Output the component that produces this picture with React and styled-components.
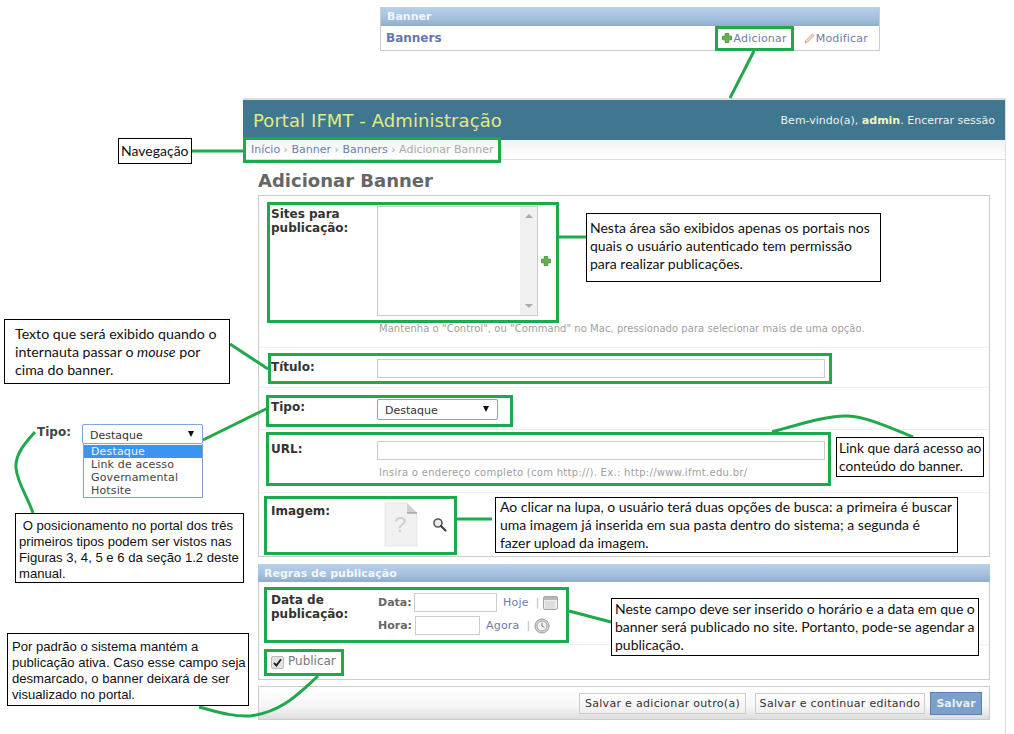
import React from "react";
import styled, { createGlobalStyle, css } from "styled-components";

const GlobalStyle = createGlobalStyle`
  html, body { margin: 0; padding: 0; background: #fff; }
  body { font-family: "DejaVu Sans", Verdana, sans-serif; color: #333; }
`;

const GREEN = "#22a84c";

const Canvas = styled.div`
  position: relative;
  width: 1014px;
  height: 734px;
  padding-top: 7px;
  box-sizing: border-box;
  overflow: hidden;
  background: #fff;
`;

/* ---------- top module ---------- */
const Module = styled.section`
  width: 500px;
  margin-left: 380px;
  box-sizing: border-box;
  border: 1px solid #ccc;
  border-top: 0;
`;
const CaptionBar = styled.div`
  height: ${(p) => p.$h}px;
  display: flex;
  align-items: center;
  padding-left: 6px;
  background: linear-gradient(#b9d0e9, #a4c0de 60%, #8fadcc);
  color: #f2f6fb;
  font-size: 11px;
  font-weight: 700;
`;
const ModuleRow = styled.div`
  height: 24px;
  display: flex;
  align-items: center;
  padding-left: 5px;
  background: #fff;
`;
const ModuleTitle = styled.span`
  flex: 1;
  font-size: 12px;
  font-weight: 700;
  color: #5f7aa8;
`;
const ModuleLink = styled.span`
  display: flex;
  align-items: center;
  gap: 1px;
  font-size: 11px;
  letter-spacing: 0.2px;
  color: #6d7ea6;
  margin-right: ${(p) => p.$mr}px;
`;

/* ---------- admin page ---------- */
const AdminPage = styled.main`
  width: 763px;
  height: 636px;
  margin: 47px 0 0 243px;
  box-sizing: border-box;
  border-top: 2px solid #ddd;
  border-right: 1px solid #ddd;
`;
const Header = styled.header`
  height: 40px;
  display: flex;
  align-items: center;
  justify-content: space-between;
  padding: 0 10px;
  background: #417690;
`;
const Brand = styled.h1`
  margin: 0;
  font-size: 18px;
  font-weight: 400;
  letter-spacing: 0.08px;
  color: #e3ea83;
`;
const Welcome = styled.div`
  font-size: 11px;
  color: #edf3e6;
  b { color: #f4f6b8; }
`;
const Breadcrumb = styled.nav`
  height: 20px;
  display: flex;
  align-items: center;
  box-sizing: border-box;
  padding-left: 8px;
  border-bottom: 1px solid #ddd;
  background: linear-gradient(#f3f3f3, #fff);
  font-size: 11px;
  color: #aaa;
  a { color: #6a82b0; }
`;
const Content = styled.div`
  padding: 0 15px;
`;
const PageTitle = styled.h2`
  height: 35px;
  margin: 0;
  padding-top: 6px;
  box-sizing: border-box;
  display: flex;
  align-items: center;
  font-size: 18px;
  font-weight: 700;
  color: #666;
`;
const Fieldset = styled.div`
  border: 1px solid #ccc;
  ${(p) => p.$noTop && css`border-top: 0;`}
`;
const FormRow = styled.div`
  height: ${(p) => p.$h}px;
  box-sizing: border-box;
  display: flex;
  padding: ${(p) => p.$pt}px 0 0 12px;
  border-bottom: 1px solid #eee;
  &:last-child { border-bottom: 0; }
`;
const Label = styled.label`
  width: 106px;
  flex: none;
  font-size: 12px;
  font-weight: 700;
  line-height: 14px;
  color: #333;
  margin-top: ${(p) => p.$mt || 0}px;
`;
const Field = styled.div`
  display: flex;
  flex-direction: column;
`;
const Help = styled.div`
  margin: 7px 0 0 2px;
  font-size: 10px;
  line-height: 12px;
  letter-spacing: ${(p) => p.$ls || 0}px;
  color: #a0a0a0;
  white-space: nowrap;
`;
const ListRow = styled.div`
  display: flex;
  align-items: center;
  gap: 3px;
`;
const ListBox = styled.div`
  width: 161px;
  height: 110px;
  box-sizing: border-box;
  border: 1px solid #ccc;
  display: flex;
  justify-content: flex-end;
`;
const Scrollbar = styled.div`
  width: 17px;
  background: #f0f0f0;
  display: flex;
  flex-direction: column;
  justify-content: space-between;
  align-items: center;
  padding: 7px 0;
`;
const ScrollArrow = styled.i`
  width: 0;
  height: 0;
  border-left: 4px solid transparent;
  border-right: 4px solid transparent;
  ${(p) => p.$up ? css`border-bottom: 4px solid #aaa;` : css`border-top: 4px solid #aaa;`}
`;
const TextInput = styled.input`
  display: block;
  width: ${(p) => p.$w}px;
  height: 19px;
  box-sizing: border-box;
  padding: 0;
  margin: 0;
  border: 1px solid #ccc;
  background: #fff;
`;
const SelectBox = styled.div`
  width: 121px;
  height: ${(p) => p.$h || 21}px;
  box-sizing: border-box;
  display: flex;
  align-items: center;
  justify-content: space-between;
  padding: 2px 8px 0 7px;
  border: 1px solid #7fa6de;
  border-radius: 2px;
  background: #fff;
  box-shadow: 0 0 1px #b7cdea;
  font-size: 11px;
  color: #333;
`;
const Caret = styled.i`
  width: 0;
  height: 0;
  margin-top: -3px;
  border-left: 3.5px solid transparent;
  border-right: 3.5px solid transparent;
  border-top: 6px solid #111;
`;
const ImageField = styled.div`
  display: flex;
  align-self: flex-start;
  align-items: center;
  gap: 14px;
  margin-left: 7px;
`;
const RegrasBar = styled(CaptionBar)`
  margin-top: 7px;
`;
const DateLines = styled.div`
  display: flex;
  flex-direction: column;
  gap: 4px;
  margin-left: 1px;
`;
const DateLine = styled.div`
  display: flex;
  align-items: center;
  font-size: 11px;
  color: #667;
`;
const DateCaption = styled.span`
  width: ${(p) => p.$w}px;
  font-weight: 700;
  color: #666;
`;
const DateLink = styled.span`
  margin-left: 6px;
  letter-spacing: 0.2px;
  color: #6d7ea6;
`;
const Pipe = styled.span`
  margin: 0 4px 0 7px;
  color: #bbb;
`;
const CheckRow = styled.div`
  height: 34px;
  box-sizing: border-box;
  display: flex;
  align-items: flex-start;
  gap: 4px;
  padding: 9px 0 0 12px;
  font-size: 12px;
  line-height: 14px;
  color: #777;
`;
const CheckBox = styled.span`
  width: 11px;
  height: 11px;
  margin-top: 2px;
  display: flex;
  align-items: center;
  justify-content: center;
  border: 1px solid #bbb;
  border-radius: 2px;
  background: #e4e4e4;
`;
const SubmitRow = styled.div`
  height: 34px;
  margin-top: 6px;
  box-sizing: border-box;
  display: flex;
  align-items: center;
  justify-content: flex-end;
  gap: 5px;
  padding-right: 7px;
  border: 1px solid #ccc;
  background: linear-gradient(#fff, #f6f6f6 60%, #ddd);
`;
const Button = styled.button`
  height: 21px;
  width: ${(p) => p.$w}px;
  margin: 0 ${(p) => p.$mr || 0}px 0 0;
  padding: 0;
  border: 1px solid #ccc;
  background: linear-gradient(#fff, #eee);
  font: 400 11px "DejaVu Sans", Verdana, sans-serif;
  letter-spacing: 0.3px;
  color: #333;
`;
const PrimaryButton = styled(Button)`
  height: 23px;
  border: 1px solid #5b80b2;
  background: #7ca0c7;
  color: #e8f0f8;
  font-weight: 700;
  letter-spacing: 0;
`;

/* ---------- annotations, lying over the page ---------- */
const Overlay = styled.svg`
  position: absolute;
  inset: 0;
  pointer-events: none;
`;
const Highlight = styled.div`
  position: absolute;
  left: ${(p) => p.$x}px;
  top: ${(p) => p.$y}px;
  width: ${(p) => p.$w}px;
  height: ${(p) => p.$h}px;
  box-sizing: border-box;
  border: 3px solid ${GREEN};
  pointer-events: none;
`;
const Callout = styled.div`
  position: absolute;
  left: ${(p) => p.$x}px;
  top: ${(p) => p.$y}px;
  width: ${(p) => p.$w}px;
  height: ${(p) => p.$h}px;
  box-sizing: border-box;
  padding: ${(p) => p.$pad || "5px 3px"};
  border: 1px solid #000;
  background: #fff;
  color: #111;
  font-family: ${(p) => (p.$arial ? '"Liberation Sans", Arial, sans-serif' : 'Lato, "Open Sans", sans-serif')};
  font-size: ${(p) => p.$size || 14}px;
  line-height: ${(p) => p.$lh || 18}px;
  white-space: pre;
`;
const TipoDemo = styled.div`
  position: absolute;
  left: 37px;
  top: 424px;
  display: flex;
  background: #fff;
`;
const TipoLabel = styled.span`
  width: 45px;
  padding-top: 1px;
  font-size: 12px;
  font-weight: 700;
  line-height: 14px;
  color: #444;
`;
const DropList = styled.ul`
  width: 120px;
  margin: 0 0 0 1px;
  padding: 1px 0 0;
  box-sizing: border-box;
  height: 54px;
  list-style: none;
  border: 1px solid #85a0c4;
  border-top: 0;
  font-size: 11px;
  letter-spacing: 0.15px;
  color: #444;
`;
const DropItem = styled.li`
  height: 13px;
  line-height: 14px;
  padding-left: 7px;
  background: ${(p) => (p.$on ? "#3b94f0" : "transparent")};
  color: ${(p) => (p.$on ? "#eef6ff" : "inherit")};
`;

/* ---------- icons ---------- */
const PlusIcon = () => (
  <svg width="10" height="10" viewBox="0 0 10 10">
    <path d="M3.2 .5h3.6v2.7h2.7v3.6H6.8v2.7H3.2V6.8H.5V3.2h2.7z" fill="#6aaf50" stroke="#3f8a3a" strokeWidth=".8" />
  </svg>
);
const PencilIcon = () => (
  <svg width="11" height="11" viewBox="0 0 11 11">
    <path d="M8.4 1 10 2.6 3.6 9 1 10l1-2.6z" fill="#f6e3b8" stroke="#c9938a" strokeWidth=".9" />
  </svg>
);
const DocIcon = () => (
  <svg width="34" height="45" viewBox="0 0 34 45">
    <path d="M1 1h22l10 10v33H1z" fill="#f1f1f1" stroke="#e6e6e6" />
    <path d="M23 1v10h10z" fill="#cfcfcf" />
    <path d="M23 11h10" stroke="#999" strokeWidth="1.2" />
    <text x="10" y="30" fontFamily="'Liberation Sans', sans-serif" fontSize="22" fill="#cfcfcf">?</text>
  </svg>
);
const LensIcon = () => (
  <svg width="15" height="15" viewBox="0 0 15 15">
    <circle cx="6" cy="6" r="4" fill="#e8eef0" stroke="#555" strokeWidth="1.6" />
    <path d="M9 9l4.5 4.5" stroke="#444" strokeWidth="2.2" strokeLinecap="round" />
  </svg>
);
const CalendarIcon = () => (
  <svg width="15" height="14" viewBox="0 0 15 14">
    <rect x=".5" y=".5" width="14" height="13" rx="1.5" fill="#eee" stroke="#a5a5a5" />
    <rect x="1" y="1" width="13" height="3" fill="#b5b9bc" />
    <path d="M2.5 6h10M2.5 8h10M2.5 10h10M2.5 12h10" stroke="#aaa" strokeDasharray="1 1" />
  </svg>
);
const ClockIcon = () => (
  <svg width="16" height="16" viewBox="0 0 16 16">
    <circle cx="8" cy="8" r="7" fill="#d8d8d8" stroke="#999" />
    <circle cx="8" cy="8" r="5" fill="#f6f6f6" stroke="#a5a5a5" />
    <path d="M8 4.5V8l2.5 1.5" fill="none" stroke="#777" />
  </svg>
);
const CheckMark = () => (
  <svg width="9" height="9" viewBox="0 0 9 9">
    <path d="M1 5l2.4 2.6L8 1.2" fill="none" stroke="#222" strokeWidth="1.9" />
  </svg>
);

const boxes = [
  [715, 26, 79, 25],
  [243, 137, 258, 26],
  [267, 202, 292, 121],
  [268, 353, 564, 31],
  [266, 395, 247, 32],
  [266, 432, 565, 54],
  [264, 496, 193, 59],
  [264, 587, 305, 56],
  [264, 649, 80, 27],
];

const leaders = [
  "M754 51L730 98",
  "M192 151H243",
  "M559 237H586",
  "M230 344L268 369",
  "M203 440L268 408",
  "M35 432C24 444 15 455 16 468C17 482 28 498 33 513",
  "M772 432C800 424 830 415 848 416C868 417 890 428 913 437",
  "M457 519H492",
  "M569 611L611 622",
  "M318 676C300 692 283 712 250 716C232 717 215 711 199 707",
];

export default function App() {
  return (
    <Canvas>
      <GlobalStyle />

      <Module>
        <CaptionBar $h={19}>Banner</CaptionBar>
        <ModuleRow>
          <ModuleTitle>Banners</ModuleTitle>
          <ModuleLink $mr={17}><PlusIcon />Adicionar</ModuleLink>
          <ModuleLink $mr={11}><PencilIcon />Modificar</ModuleLink>
        </ModuleRow>
      </Module>

      <AdminPage>
        <Header>
          <Brand>Portal IFMT - Administração</Brand>
          <Welcome>Bem-vindo(a), <b>admin</b>. Encerrar sessão</Welcome>
        </Header>
        <Breadcrumb>
          <span><a>Início</a> › <a>Banner</a> › <a>Banners</a> › Adicionar Banner</span>
        </Breadcrumb>
        <Content>
          <PageTitle>Adicionar Banner</PageTitle>
          <Fieldset>
            <FormRow $h={152} $pt={10}>
              <Label $mt={1}>Sites para publicação:</Label>
              <Field>
                <ListRow>
                  <ListBox>
                    <Scrollbar><ScrollArrow $up /><ScrollArrow /></Scrollbar>
                  </ListBox>
                  <PlusIcon />
                </ListRow>
                <Help $ls={0.05}>Mantenha o "Control", ou "Command" no Mac, pressionado para selecionar mais de uma opção.</Help>
              </Field>
            </FormRow>
            <FormRow $h={40} $pt={11}>
              <Label $mt={1}>Título:</Label>
              <TextInput $w={448} readOnly />
            </FormRow>
            <FormRow $h={42} $pt={11}>
              <Label $mt={1}>Tipo:</Label>
              <SelectBox>Destaque<Caret /></SelectBox>
            </FormRow>
            <FormRow $h={63} $pt={11}>
              <Label $mt={1}>URL:</Label>
              <Field>
                <TextInput $w={448} readOnly />
                <Help $ls={0.3}>Insira o endereço completo (com http://). Ex.: http://www.ifmt.edu.br/</Help>
              </Field>
            </FormRow>
            <FormRow $h={63} $pt={9}>
              <Label $mt={2}>Imagem:</Label>
              <ImageField><DocIcon /><LensIcon /></ImageField>
            </FormRow>
          </Fieldset>

          <RegrasBar $h={18}>Regras de publicação</RegrasBar>
          <Fieldset $noTop>
            <FormRow $h={63} $pt={11}>
              <Label>Data de publicação:</Label>
              <DateLines>
                <DateLine>
                  <DateCaption $w={36}>Data:</DateCaption>
                  <TextInput $w={83} readOnly />
                  <DateLink>Hoje</DateLink>
                  <Pipe>|</Pipe>
                  <CalendarIcon />
                </DateLine>
                <DateLine>
                  <DateCaption $w={37}>Hora:</DateCaption>
                  <TextInput $w={65} readOnly />
                  <DateLink>Agora</DateLink>
                  <Pipe>|</Pipe>
                  <ClockIcon />
                </DateLine>
              </DateLines>
            </FormRow>
            <CheckRow>
              <CheckBox><CheckMark /></CheckBox>
              Publicar
            </CheckRow>
          </Fieldset>

          <SubmitRow>
            <Button $w={167} $mr={4}>Salvar e adicionar outro(a)</Button>
            <Button $w={170}>Salvar e continuar editando</Button>
            <PrimaryButton $w={52}>Salvar</PrimaryButton>
          </SubmitRow>
        </Content>
      </AdminPage>

      <TipoDemo>
        <TipoLabel>Tipo:</TipoLabel>
        <div>
          <SelectBox $h={20}>Destaque<Caret /></SelectBox>
          <DropList>
            <DropItem $on>Destaque</DropItem>
            <DropItem>Link de acesso</DropItem>
            <DropItem>Governamental</DropItem>
            <DropItem>Hotsite</DropItem>
          </DropList>
        </div>
      </TipoDemo>

      {boxes.map(([x, y, w, h]) => (
        <Highlight key={`${x}-${y}`} $x={x} $y={y} $w={w} $h={h} />
      ))}

      <Overlay width="1014" height="734" viewBox="0 0 1014 734" fill="none" stroke={GREEN} strokeWidth="3">
        {leaders.map((d) => <path key={d} d={d} />)}
      </Overlay>

      <Callout $x={118} $y={138} $w={74} $h={26} $pad="3px 2px">Navegação</Callout>
      <Callout $x={586} $y={213} $w={295} $h={69} $pad="5px 3px">{"Nesta área são exibidos apenas os portais nos\nquais o usuário autenticado tem permissão\npara realizar publicações."}</Callout>
      <Callout $x={4} $y={319} $w={226} $h={65} $size={14.2} $pad="5px 10px"><>Texto que será exibido quando o{"\n"}internauta passar o <em>mouse</em> por{"\n"}cima do banner.</></Callout>
      <Callout $x={15} $y={513} $w={229} $h={70} $arial $size={13.1} $lh={16} $pad="4px 3px">{" O posicionamento no portal dos três\nprimeiros tipos podem ser vistos nas\nFiguras 3, 4, 5 e 6 da seção 1.2 deste\nmanual."}</Callout>
      <Callout $x={7} $y={633} $w={242} $h={73} $arial $size={13.1} $lh={16} $pad="5px 4px">{"Por padrão o sistema mantém a\npublicação ativa. Caso esse campo seja\ndesmarcado, o banner deixará de ser\nvisualizado no portal."}</Callout>
      <Callout $x={836} $y={437} $w={148} $h={40} $size={13.7} $pad="1px 2px">{"Link que dará acesso ao\nconteúdo do banner."}</Callout>
      <Callout $x={495} $y={497} $w={463} $h={56} $pad="0 4px">{"Ao clicar na lupa, o usuário terá duas opções de busca: a primeira é buscar\numa imagem já inserida em sua pasta dentro do sistema; a segunda é\nfazer upload da imagem."}</Callout>
      <Callout $x={611} $y={598} $w={368} $h={58} $pad="1px 3px">{"Neste campo deve ser inserido o horário e a data em que o\nbanner será publicado no site. Portanto, pode-se agendar a\npublicação."}</Callout>
    </Canvas>
  );
}
